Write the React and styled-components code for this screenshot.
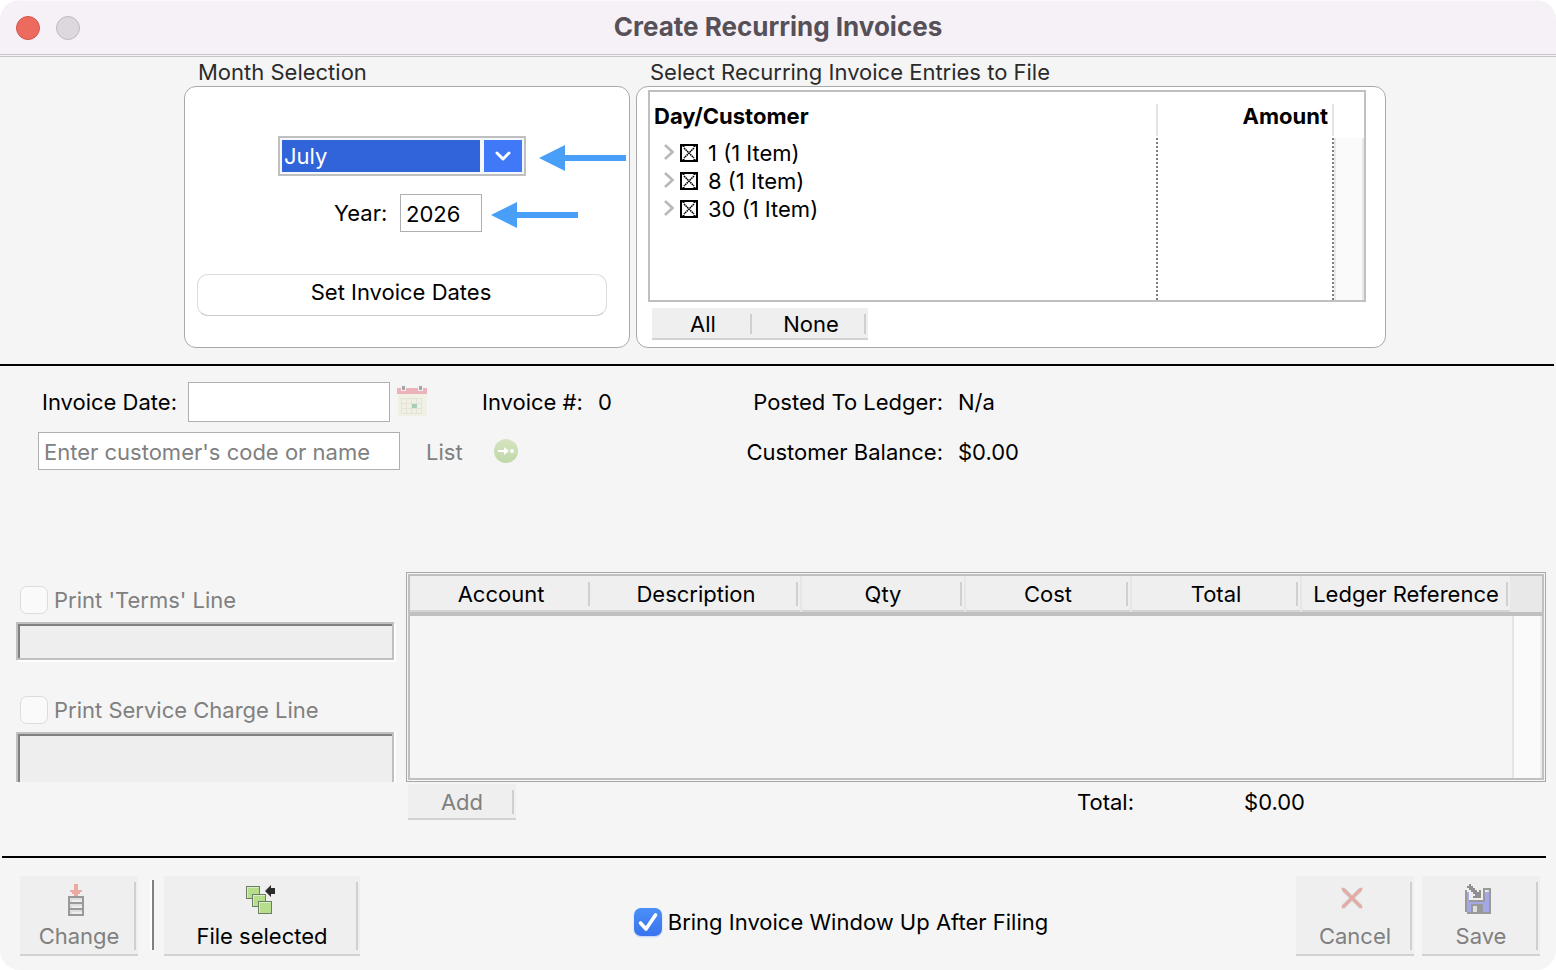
import React, { useState } from 'react';
import styled, { createGlobalStyle, css } from 'styled-components';

const GlobalStyle = createGlobalStyle`
  *, *::before, *::after { box-sizing: border-box; }
  body {
    margin: 0;
    background: #fff;
    color: #000;
    font-family: Inter, "Liberation Sans", sans-serif;
    font-size: 22px;
    line-height: 28px;
  }
  button, input, select, textarea {
    margin: 0;
    font: inherit;
    color: inherit;
  }
`;

/* ---------- window chrome ---------- */

const Window = styled.main`
  display: flex;
  flex-direction: column;
  min-height: 100vh;
  background: #f5f5f5;
  border-radius: 20px;
  overflow: hidden;
`;

const TitleBar = styled.header`
  display: grid;
  grid-template-columns: 1fr auto 1fr;
  align-items: center;
  height: 57px;
  padding: 0 16px;
  background: #f6f1f7;
  border-top: 1px solid #fbf9fb;
  border-bottom: 3px double #c9c6ca;
`;

const WindowControls = styled.div`
  display: flex;
  gap: 16px;
`;

const WindowDot = styled.button`
  width: 24px;
  height: 24px;
  padding: 0;
  border-radius: 50%;
  border: 1px solid ${(p) => (p.$close ? '#d5564c' : '#bfbac0')};
  background: ${(p) => (p.$close ? '#ed6a5e' : '#ddd8de')};
`;

const WindowTitle = styled.h1`
  margin: 0;
  padding-bottom: 2px;
  font-size: 26px;
  line-height: 32px;
  font-weight: 700;
  color: #565058;
`;

const Rule = styled.hr`
  width: auto;
  height: 2px;
  margin: ${(p) => (p.$footer ? '36px 10px 0 2px' : '16px 2px 0 0')};
  border: 0;
  background: #000;
`;

/* ---------- upper panels ---------- */

const Panels = styled.div`
  display: grid;
  grid-template-columns: minmax(446px, 446fr) minmax(0, 750fr);
  gap: 6px;
  padding: 0 170px 0 184px;
`;

const PanelGroup = styled.section`
  display: flex;
  flex-direction: column;
`;

const PanelTitle = styled.h2`
  margin: 0;
  padding: 2px 0 0 14px;
  font-size: 22px;
  line-height: 27px;
  font-weight: 400;
  color: #2b2b2b;
`;

const Panel = styled.div`
  flex: 1;
  border: 1px solid #a9a9a9;
  border-radius: 12px;
  background: #fff;
  padding: ${(p) => p.$padding};
`;

const PeriodRow = styled.div`
  display: flex;
  align-items: center;
  margin-bottom: 18px;
  padding-left: ${(p) => p.$indent};
`;

const MonthPicker = styled.div`
  display: flex;
  gap: 4px;
  width: 248px;
  height: 40px;
  margin-right: 13px;
  padding: 2px;
  border: 2px solid #c0c0c0;
  background: #f5f8fa;
`;

const MonthSelect = styled.select`
  appearance: none;
  flex: 1;
  min-width: 0;
  height: 32px;
  padding: 0 2px;
  border: 0;
  border-radius: 0;
  outline: 0;
  background: #3164d8;
  color: #fff;
`;

const PickerButton = styled.button`
  display: flex;
  align-items: center;
  justify-content: center;
  width: 38px;
  height: 32px;
  padding: 0;
  border: 0;
  background: #3f79f7;
`;

const YearLabel = styled.label`
  width: 66px;
`;

const TextField = styled.input`
  flex: none;
  align-self: flex-start;
  width: ${(p) => p.$width};
  height: ${(p) => p.$height || '38px'};
  padding: 2px 5px 0;
  border: 1px solid #b0b0b0;
  border-radius: 0;
  outline: 0;
  background: #fff;
  &::placeholder { color: #808080; opacity: 1; }
`;

const YearField = styled(TextField)`
  margin-right: 9px;
`;

const WideButton = styled.button`
  display: block;
  width: 410px;
  height: 42px;
  margin: 42px 0 0 12px;
  padding: 0 2px 6px 0;
  border: 1px solid #dedede;
  border-bottom-color: #cccccc;
  border-radius: 11px;
  background: #fff;
`;

/* ---------- recurring entries ---------- */

const EntriesFrame = styled.div`
  border: 2px solid #c0c0c0;
`;

const EntriesTable = styled.table`
  width: 100%;
  border-collapse: separate;
  border-spacing: 0;
  table-layout: fixed;
`;

const EntryHead = styled.th`
  width: ${(p) => p.$width};
  height: 46px;
  padding: 2px 6px 0 4px;
  font-weight: 700;
  text-align: ${(p) => (p.$right ? 'right' : 'left')};
  background: linear-gradient(#e4e4e4, #e4e4e4) right 0 top 12px / 2px 32px no-repeat;
`;

const ScrollHead = styled.td`
  width: 30px;
  padding: 0;
`;

const EntryCell = styled.td`
  height: ${(p) => (p.$filler ? '78px' : '28px')};
  padding: 0;
  background: repeating-linear-gradient(#7c7c7c 0 2px, #fff 2px 4px) right top / 2px 100% no-repeat;
`;

const EntriesScroll = styled.td`
  padding: 0;
  border: solid #e8e8e8;
  border-width: 0 2px;
  background: #fafafa;
`;

const Entry = styled.div`
  display: flex;
  align-items: center;
  height: 28px;
  padding-left: 14px;
`;

const ExpandButton = styled.button`
  display: flex;
  width: 10px;
  height: 16px;
  margin-right: 6px;
  padding: 0;
  border: 0;
  background: none;
`;

const EntryLabel = styled.label`
  display: flex;
  align-items: center;
  gap: 10px;
  padding-top: 2px;
`;

const ButtonStrip = styled.div`
  display: flex;
  padding: 6px 0 0 4px;
`;

/* ---------- buttons and tick boxes ---------- */

const FlatButton = styled.button`
  width: ${(p) => p.$width};
  height: ${(p) => p.$height || '32px'};
  padding: 2px 0 0;
  border: 0;
  border-bottom: 2px solid #d2d2d2;
  background:
    linear-gradient(#d0d0d0, #d0d0d0) right 2px top 6px / 2px calc(100% - 10px) no-repeat,
    #efefef;
  &:disabled { color: #808080; }
`;

const IconButton = styled(FlatButton)`
  display: flex;
  flex-direction: column;
  align-items: center;
  justify-content: space-between;
  padding: 8px 0 4px;

  svg { margin-right: 6px; }
`;

const TickFrame = styled.span`
  position: relative;
  display: flex;

  svg {
    position: absolute;
    inset: 0;
    pointer-events: none;
  }
`;

const TickInput = styled.input`
  appearance: none;
  width: 28px;
  height: 28px;
  border: 1px solid #dcdcdc;
  border-radius: 7px;
  background: #fafafa;
  &:checked {
    border: 0;
    background: linear-gradient(#4a90f8, #3a73ee);
    box-shadow: 0 1px 2px #b9cdf8;
  }
`;

const CrossInput = styled.input`
  appearance: none;
  width: 18px;
  height: 18px;
  border: 2px solid #000;
  background: #fff;
`;

const TickLabel = styled.label`
  display: flex;
  align-items: center;
  gap: 6px;
  ${(p) => p.$muted && css`color: #808080; padding-left: 4px;`}
`;

/* ---------- invoice form ---------- */

const InvoiceForm = styled.section`
  display: grid;
  grid-template-columns: 444px 264px minmax(0, 1fr);
  grid-template-rows: 40px 40px;
  row-gap: 10px;
  padding: 16px 38px 24px;
  white-space: nowrap;
`;

const FormCell = styled.div`
  display: flex;
  align-items: center;
`;

const DateLabel = styled.label`
  width: 150px;
  padding-left: 4px;
`;

const PlainButton = styled.button`
  display: flex;
  margin-left: ${(p) => p.$gap};
  padding: 0;
  border: 0;
  background: none;
  &:disabled { color: #808080; }
`;

const Facts = styled.dl`
  display: grid;
  grid-template-columns: ${(p) => p.$label} auto;
  justify-content: start;
  column-gap: ${(p) => p.$gap || '15px'};
  margin: 0;

  dt { text-align: right; }
  dd { margin: 0; }
`;

/* ---------- details ---------- */

const Details = styled.section`
  display: grid;
  grid-template-columns: 378px minmax(0, 1fr);
  gap: 12px;
  margin-top: auto;
  padding: 0 10px 0 16px;
`;

const PrintOptions = styled.div`
  display: flex;
  flex-direction: column;
  gap: 8px;
  padding-top: 14px;
`;

const sunken = css`
  display: block;
  width: 100%;
  border: 2px solid #c0c0c0;
  border-radius: 0;
  background: #eeeeee;
  box-shadow: inset 2px 2px 0 #808080, 2px 2px 0 #fff;
`;

const TermsField = styled.input`
  ${sunken}
  height: 38px;
  margin-bottom: 28px;
`;

const ChargeField = styled.textarea`
  ${sunken}
  height: 50px;
  border-bottom: 0;
  box-shadow: inset 2px 2px 0 #808080, 2px 0 0 #fff;
  resize: none;
`;

const LinesFrame = styled.div`
  padding: 1px;
  border: 1px solid #a8a8a8;
`;

const LinesTable = styled.table`
  width: 100%;
  border: 2px solid #c0c0c0;
  border-collapse: separate;
  border-spacing: 0;
  table-layout: fixed;
`;

const LineHead = styled.th`
  width: ${(p) => p.$width};
  height: 40px;
  padding: ${(p) => (p.$edge ? '0 2px 0 0' : '0')};
  font-weight: 400;
  border-bottom: 4px solid #c0c0c0;
  background:
    linear-gradient(#d0d0d0, #d0d0d0) right ${(p) => (p.$edge ? '4px' : '2px')} top 6px / 2px 24px no-repeat,
    linear-gradient(#e6e6e6, #e6e6e6) right top / ${(p) => (p.$edge ? '2px' : '0')} 100% no-repeat,
    linear-gradient(#d4d4d4, #d4d4d4) left bottom / 100% 2px no-repeat,
    #efefef;
`;

const CornerHead = styled.td`
  width: 32px;
  padding: 0;
  border-bottom: 4px solid #c0c0c0;
  background: #e8e8e8;
`;

const LinesBody = styled.td`
  height: 162px;
  padding: 0;
`;

const LinesScroll = styled.td`
  padding: 0;
  background:
    linear-gradient(#e4e4e4, #e4e4e4) left 2px top 0 / 2px 100% no-repeat,
    linear-gradient(#f5f5f5, #f5f5f5) left top / 2px 100% no-repeat,
    linear-gradient(#ebebeb, #ebebeb) right top / 2px 100% no-repeat,
    #fafafa;
`;

const LinesFooter = styled.div`
  display: flex;
  align-items: center;
  justify-content: space-between;
  padding: 2px 241px 0 2px;
`;

/* ---------- footer ---------- */

const Footer = styled.footer`
  display: flex;
  align-items: center;
  padding: 18px 16px 14px 20px;
`;

const Divider = styled.span`
  width: 4px;
  height: 70px;
  margin: 0 10px 2px 12px;
  border-left: 2px solid #fff;
  border-right: 2px solid #808080;
`;

const FooterCentre = styled.div`
  display: flex;
  flex: 1;
  justify-content: center;
  padding: 12px 0 0 26px;
`;

const FooterActions = styled.div`
  display: flex;
  gap: 8px;
`;

/* ---------- drawings ---------- */

const PointerArrow = () => (
  <svg width="87" height="30" viewBox="0 0 87 30" aria-hidden="true">
    <path d="M0 17 26 4V14H87V20H26V30Z" fill="#499ff8" />
  </svg>
);

const ChevronDown = () => (
  <svg width="18" height="12" viewBox="0 0 18 12" fill="none" aria-hidden="true">
    <path d="M3 3 9 9 15 3" stroke="#fff" strokeWidth="3" strokeLinecap="round" strokeLinejoin="round" />
  </svg>
);

const ChevronRight = () => (
  <svg width="10" height="16" viewBox="0 0 10 16" fill="none" aria-hidden="true">
    <path d="M1 1 8.5 8 1 15" stroke="#b9b9b9" strokeWidth="2.6" />
  </svg>
);

const Cross = () => (
  <svg width="18" height="18" viewBox="0 0 18 18" fill="none" aria-hidden="true">
    <path d="M4 4 14 14M14 4 4 14" stroke="#000" strokeWidth="1.5" strokeDasharray="1.6 0.6" />
    <path d="M2.5 2.5h2M13.5 2.5h2M2.5 15.5h2M13.5 15.5h2" stroke="#000" />
  </svg>
);

const Tick = () => (
  <svg width="28" height="28" viewBox="0 0 28 28" fill="none" aria-hidden="true">
    <path d="M6.5 15 12 21 21.5 7" stroke="#fff" strokeWidth="3.6" strokeLinecap="round" strokeLinejoin="round" />
  </svg>
);

const CalendarIcon = () => (
  <svg width="32" height="34" viewBox="0 0 32 34" aria-hidden="true">
    <path d="M2 9H31V31H2Z" fill="#f1f0e6" />
    <path d="M1 3H31V9H1Z" fill="#ebb2b7" />
    <path d="M5 0H10V6H5ZM22 0H27V6H22Z" fill="#f5f0f0" />
    <path d="M6 1H9V5H6ZM23 1H26V5H23Z" fill="#a3a6ab" />
    <path d="M5 13.5H26M5 18.5H26M5 23.5H26M5 28.5H26M5.5 13V29M10.5 13V29M15.5 13V29M20.5 13V29M25.5 13V29" stroke="#e3e3d6" fill="none" />
    <path d="M16 19H21V23H16Z" fill="#a4d0bb" />
  </svg>
);

const GoIcon = () => (
  <svg width="26" height="26" viewBox="0 0 26 26" aria-hidden="true">
    <defs>
      <linearGradient id="go" x1="0" y1="0" x2="0" y2="1">
        <stop offset="0" stopColor="#d6e4c0" />
        <stop offset="1" stopColor="#bfd8a8" />
      </linearGradient>
    </defs>
    <circle cx="13" cy="12" r="12" fill="url(#go)" />
    <path d="M5 11H11V8L16 12 11 16V13H5Z" fill="#fff" />
    <circle cx="19" cy="12" r="2" fill="#fff" />
  </svg>
);

const ChangeIcon = () => (
  <svg width="18" height="32" viewBox="0 0 18 32" shapeRendering="crispEdges" aria-hidden="true">
    <path d="M7 0H11V6H15V8H13V10H11V12H7V10H5V8H3V6H7Z" fill="#eaa9a1" />
    <path d="M1 12H17V32H1Z" fill="#999" />
    <path d="M3 14H15V18H3ZM3 20H15V24H3ZM3 26H15V30H3Z" fill="#dedede" />
    <path d="M5 16H15V18H5ZM5 22H15V24H5ZM5 28H15V30H5Z" fill="#eeeeee" />
  </svg>
);

const FileIcon = () => (
  <svg width="30" height="30" viewBox="0 0 30 30" overflow="visible" aria-hidden="true">
    {[[2, 2], [8, 10], [14, 17]].map(([x, y]) => (
      <g key={x}>
        <rect x={x + 0.5} y={y + 0.5} width="13" height="12" fill="#b5dd8b" stroke="#6c7d67" />
        <path d={`M${x + 1} ${y + 1.5}h12M${x + 1.5} ${y + 1}v11`} stroke="#d8f0bf" fill="none" />
      </g>
    ))}
    <path d="M21 7 27 1V4H31V10H27V13Z" fill="#2b2b2b" />
  </svg>
);

const CancelIcon = () => (
  <svg width="22" height="28" viewBox="0 0 22 28" fill="none" aria-hidden="true">
    <path d="M2 5 20 23M20 5 2 23" stroke="#cfc3c0" strokeWidth="4" />
    <path d="M1 4 21 24M21 4 1 24" stroke="#eca49e" strokeWidth="1.8" />
  </svg>
);

const SaveIcon = () => (
  <svg width="26" height="30" viewBox="0 0 26 30" shapeRendering="crispEdges" aria-hidden="true">
    <path d="M0 6H2V28H24V6H20V4H26V30H2V28H0Z" fill="#999" />
    <path d="M2 8H6V18H20V8H24V28H18V20H6V28H2Z" fill="#a3a9e6" />
    <path d="M4 6V16H20V6H18V4H4Z" fill="#efefef" />
    <path d="M4 16H20V18H4ZM18 4H20V16H18ZM6 20H18V28H6Z" fill="#999" />
    <path d="M8 22H12V28H8Z" fill="#dedede" />
    <path d="M22 6H24V8H22Z" fill="#dedede" />
    <path d="M4 0H6V2H8V4H10V6H12V8H14V6H16V14H8V12H10V10H8V8H6V6H4V4H2V2H4Z" fill="#8f8f8f" />
  </svg>
);

/* ---------- data ---------- */

const months = ['January', 'February', 'March', 'April', 'May', 'June', 'July',
  'August', 'September', 'October', 'November', 'December'];

const entries = [
  { day: 1, items: '1 Item' },
  { day: 8, items: '1 Item' },
  { day: 30, items: '1 Item' },
];

const lineColumns = [
  { name: 'Account', width: '182px' },
  { name: 'Description', width: '210px', edge: true },
  { name: 'Qty', width: '164px', edge: true },
  { name: 'Cost', width: '166px', edge: true },
  { name: 'Total', width: '170px', edge: true },
  { name: 'Ledger Reference', width: '208px' },
];

export default function App() {
  const [month, setMonth] = useState('July');
  const [year, setYear] = useState('2026');
  const [picked, setPicked] = useState([1, 8, 30]);
  const [bringUp, setBringUp] = useState(true);

  const toggle = (day) =>
    setPicked((days) => (days.includes(day) ? days.filter((d) => d !== day) : [...days, day]));

  return (
    <>
      <GlobalStyle />
      <Window>
        <TitleBar>
          <WindowControls>
            <WindowDot $close aria-label="Close" />
            <WindowDot aria-label="Minimise" />
          </WindowControls>
          <WindowTitle>Create Recurring Invoices</WindowTitle>
        </TitleBar>

        <Panels>
          <PanelGroup>
            <PanelTitle>Month Selection</PanelTitle>
            <Panel $padding="49px 0 0 0">
              <PeriodRow $indent="93px">
                <MonthPicker>
                  <MonthSelect aria-label="Month" value={month} onChange={(e) => setMonth(e.target.value)}>
                    {months.map((m) => <option key={m}>{m}</option>)}
                  </MonthSelect>
                  <PickerButton aria-label="Show months"><ChevronDown /></PickerButton>
                </MonthPicker>
                <PointerArrow />
              </PeriodRow>
              <PeriodRow $indent="149px">
                <YearLabel htmlFor="year">Year:</YearLabel>
                <YearField id="year" $width="82px" value={year} onChange={(e) => setYear(e.target.value)} />
                <PointerArrow />
              </PeriodRow>
              <WideButton>Set Invoice Dates</WideButton>
            </Panel>
          </PanelGroup>

          <PanelGroup>
            <PanelTitle>Select Recurring Invoice Entries to File</PanelTitle>
            <Panel $padding="3px 19px 7px 11px">
              <EntriesFrame>
                <EntriesTable>
                  <thead>
                    <tr>
                      <EntryHead>Day/Customer</EntryHead>
                      <EntryHead $width="176px" $right>Amount</EntryHead>
                      <ScrollHead />
                    </tr>
                  </thead>
                  <tbody>
                    {entries.map(({ day, items }, i) => (
                      <tr key={day}>
                        <EntryCell>
                          <Entry>
                            <ExpandButton aria-label={`Expand day ${day}`}><ChevronRight /></ExpandButton>
                            <EntryLabel>
                              <TickFrame>
                                <CrossInput type="checkbox" checked={picked.includes(day)} onChange={() => toggle(day)} />
                                {picked.includes(day) && <Cross />}
                              </TickFrame>
                              {`${day} (${items})`}
                            </EntryLabel>
                          </Entry>
                        </EntryCell>
                        <EntryCell />
                        {i === 0 && <EntriesScroll rowSpan={entries.length + 1} />}
                      </tr>
                    ))}
                    <tr>
                      <EntryCell $filler />
                      <EntryCell $filler />
                    </tr>
                  </tbody>
                </EntriesTable>
              </EntriesFrame>
              <ButtonStrip>
                <FlatButton $width="102px" onClick={() => setPicked(entries.map((e) => e.day))}>All</FlatButton>
                <FlatButton $width="114px" onClick={() => setPicked([])}>None</FlatButton>
              </ButtonStrip>
            </Panel>
          </PanelGroup>
        </Panels>

        <Rule />

        <InvoiceForm>
          <FormCell>
            <DateLabel htmlFor="date">Invoice Date:</DateLabel>
            <TextField id="date" $width="202px" $height="40px" />
            <PlainButton $gap="6px" disabled aria-label="Choose date"><CalendarIcon /></PlainButton>
          </FormCell>
          <FormCell>
            <Facts $label="auto"><dt>Invoice #:</dt><dd>0</dd></Facts>
          </FormCell>
          <FormCell>
            <Facts $label="197px"><dt>Posted To Ledger:</dt><dd>N/a</dd></Facts>
          </FormCell>
          <FormCell>
            <TextField $width="362px" aria-label="Customer" placeholder="Enter customer's code or name" />
            <PlainButton $gap="26px" disabled>List</PlainButton>
            <PlainButton $gap="30px" disabled aria-label="Go to customer"><GoIcon /></PlainButton>
          </FormCell>
          <FormCell />
          <FormCell>
            <Facts $label="197px"><dt>Customer Balance:</dt><dd>$0.00</dd></Facts>
          </FormCell>
        </InvoiceForm>

        <Details>
          <PrintOptions>
            <TickLabel $muted>
              <TickFrame><TickInput type="checkbox" disabled /></TickFrame>
              Print 'Terms' Line
            </TickLabel>
            <TermsField aria-label="Terms line" disabled />
            <TickLabel $muted>
              <TickFrame><TickInput type="checkbox" disabled /></TickFrame>
              Print Service Charge Line
            </TickLabel>
            <ChargeField aria-label="Service charge line" disabled />
          </PrintOptions>
          <div>
            <LinesFrame>
              <LinesTable>
                <thead>
                  <tr>
                    {lineColumns.map((c) => (
                      <LineHead key={c.name} $width={c.width} $edge={c.edge}>{c.name}</LineHead>
                    ))}
                    <CornerHead />
                  </tr>
                </thead>
                <tbody>
                  <tr>
                    <LinesBody colSpan={6} />
                    <LinesScroll />
                  </tr>
                </tbody>
              </LinesTable>
            </LinesFrame>
            <LinesFooter>
              <FlatButton $width="108px" $height="36px" disabled>Add</FlatButton>
              <Facts $label="auto" $gap="110px"><dt>Total:</dt><dd>$0.00</dd></Facts>
            </LinesFooter>
          </div>
        </Details>

        <Rule $footer />

        <Footer>
          <IconButton $width="118px" $height="80px" disabled><ChangeIcon />Change</IconButton>
          <Divider />
          <IconButton $width="196px" $height="80px"><FileIcon />File selected</IconButton>
          <FooterCentre>
            <TickLabel>
              <TickFrame>
                <TickInput type="checkbox" checked={bringUp} onChange={(e) => setBringUp(e.target.checked)} />
                {bringUp && <Tick />}
              </TickFrame>
              Bring Invoice Window Up After Filing
            </TickLabel>
          </FooterCentre>
          <FooterActions>
            <IconButton $width="118px" $height="80px" disabled><CancelIcon />Cancel</IconButton>
            <IconButton $width="118px" $height="80px" disabled><SaveIcon />Save</IconButton>
          </FooterActions>
        </Footer>
      </Window>
    </>
  );
}
